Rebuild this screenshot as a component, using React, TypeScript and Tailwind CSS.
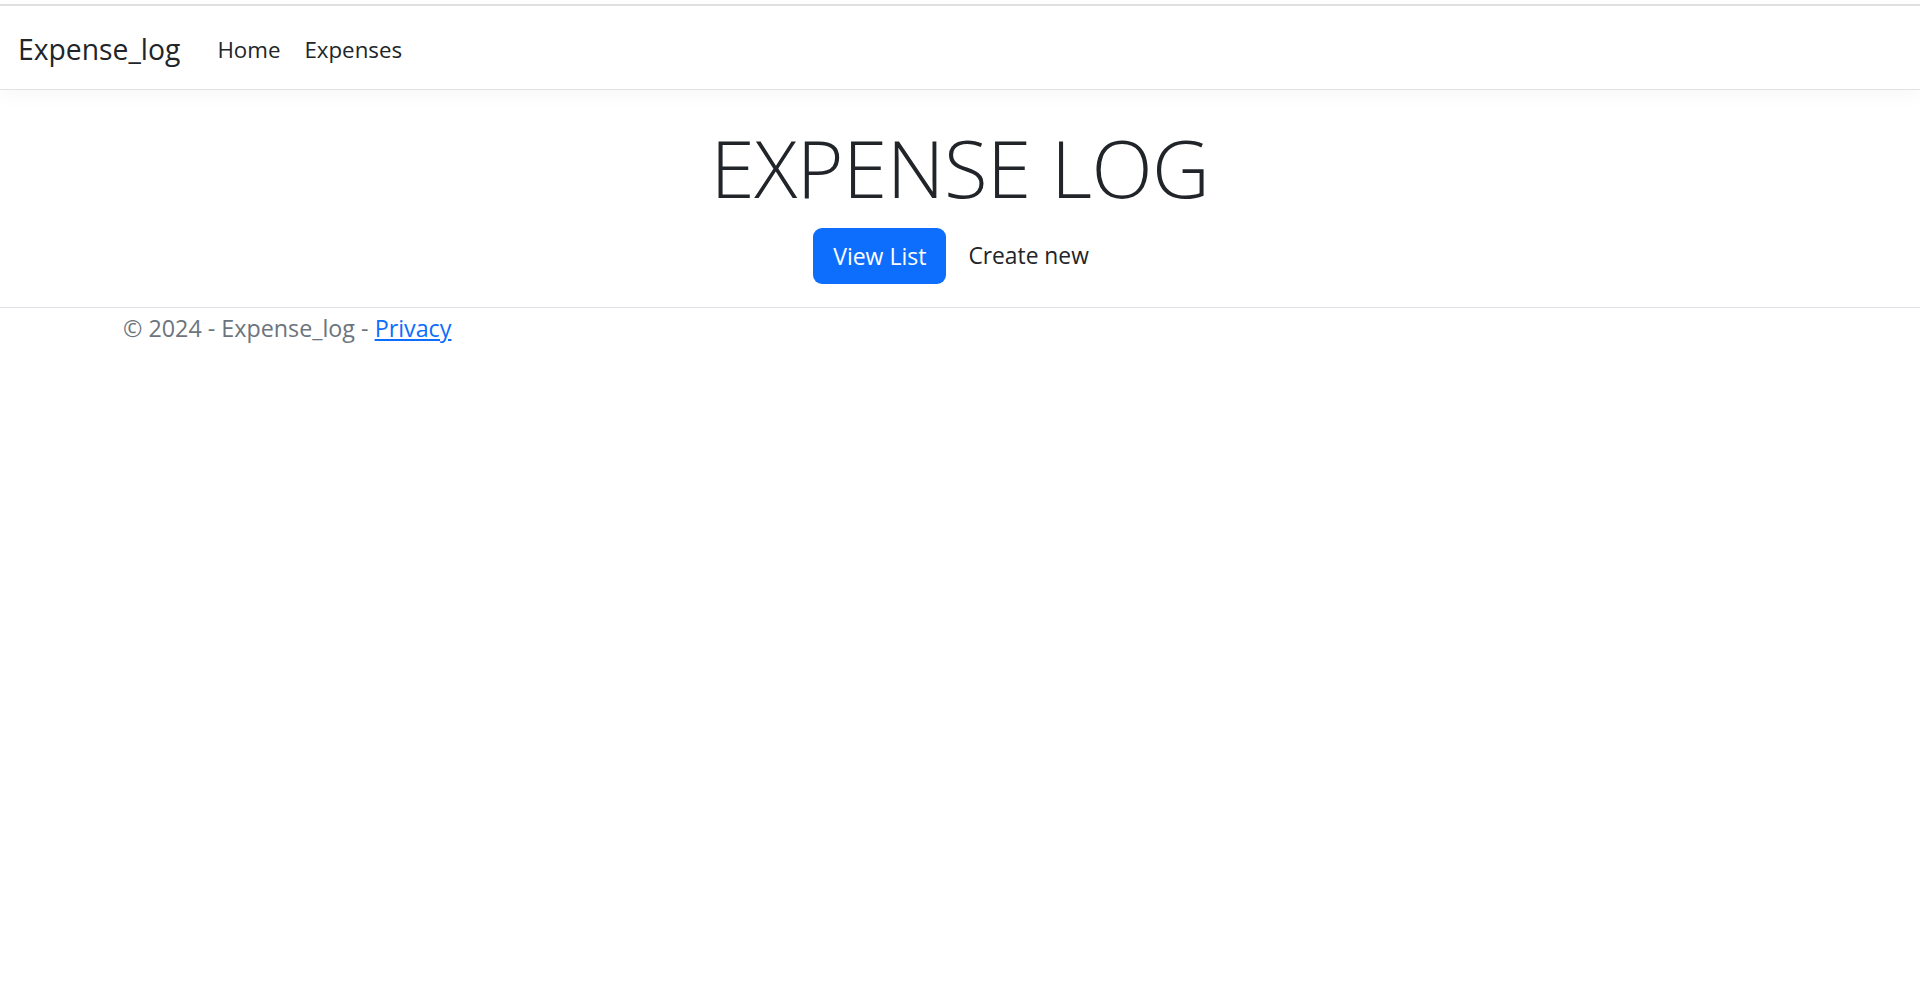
/**
 * Expense log landing page (ASP.NET-style bootstrap layout)
 */

export default function App() {
  return (
    <div className="min-h-screen bg-white text-[#212529] font-['Open_Sans','Noto_Sans',sans-serif]">
      {/* Top edge */}
      <div className="h-[4px]" />
      <div className="h-[2px] bg-[#e1e1e1]" />

      {/* Navbar */}
      <nav className="h-[84px] border-b border-[#e3e3e3] flex items-center px-[18px] shadow-[0_6px_18px_rgba(0,0,0,0.03)]">
        <a href="#" className="text-[28.3px] leading-[45px] mr-[25px] pt-[4px] text-[#212529]">
          Expense_log
        </a>
        <ul className="flex items-center text-[22.3px] pt-[4px]">
          <li>
            <a href="#" className="px-[12px] text-[#212529]">Home</a>
          </li>
          <li>
            <a href="#" className="px-[12px] text-[#212529]">Expenses</a>
          </li>
        </ul>
      </nav>

      {/* Main */}
      <main className="pt-[27px] pb-[23px] text-center">
        <h1 className="text-[80px] font-light leading-[100px] tracking-[-0.5px]">EXPENSE LOG</h1>
        <div className="mt-[11px] pr-[18px] flex items-center justify-center gap-[22px]">
          <a
            href="#"
            className="h-[56px] px-[20px] flex items-center rounded-[9px] bg-[#0d6efd] text-white text-[23px]"
          >
            View List
          </a>
          <a href="#" className="h-[56px] flex items-center text-[22.8px] text-[#212529]">
            Create new
          </a>
        </div>
      </main>

      {/* Footer */}
      <footer className="border-t border-[#dee2e6] text-[#6c757d] text-[23.3px]">
        <div className="pl-[123px] pt-[1px] leading-[38px]">
          © 2024 - Expense_log -{' '}
          <a href="#" className="text-[#0d6efd] underline">
            Privacy
          </a>
        </div>
      </footer>
    </div>
  )
}
